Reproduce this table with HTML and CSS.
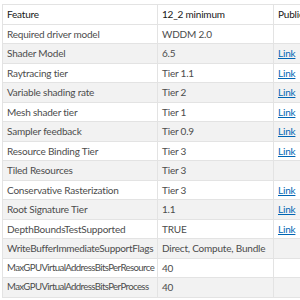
FILE: index.html
```html
<!DOCTYPE html>
<html lang="en">
<head>
    <meta charset="UTF-8">
    <meta name="viewport" content="width=device-width, initial-scale=1.0">
    <title>Feature Levels</title>
    <link rel="stylesheet" href="styles.css">
</head>
<body>
    <table class="features">
        <colgroup>
            <col class="col-feature">
            <col class="col-min">
            <col class="col-doc">
        </colgroup>
        <thead>
            <tr><th>Feature</th><th>12_2 minimum</th><th>Public documentation</th></tr>
        </thead>
        <tbody>
            <tr><td>Required driver model</td><td>WDDM 2.0</td><td></td></tr>
            <tr><td>Shader Model</td><td>6.5</td><td><a href="#">Link</a></td></tr>
            <tr><td>Raytracing tier</td><td>Tier 1.1</td><td><a href="#">Link</a></td></tr>
            <tr><td>Variable shading rate</td><td>Tier 2</td><td><a href="#">Link</a></td></tr>
            <tr><td>Mesh shader tier</td><td>Tier 1</td><td><a href="#">Link</a></td></tr>
            <tr><td>Sampler feedback</td><td>Tier 0.9</td><td><a href="#">Link</a></td></tr>
            <tr><td>Resource Binding Tier</td><td>Tier 3</td><td><a href="#">Link</a></td></tr>
            <tr><td>Tiled Resources</td><td>Tier 3</td><td></td></tr>
            <tr><td>Conservative Rasterization</td><td>Tier 3</td><td><a href="#">Link</a></td></tr>
            <tr><td>Root Signature Tier</td><td>1.1</td><td><a href="#">Link</a></td></tr>
            <tr><td>DepthBoundsTestSupported</td><td>TRUE</td><td><a href="#">Link</a></td></tr>
            <tr><td class="long">WriteBufferImmediateSupportFlags</td><td>Direct, Compute, Bundle</td><td></td></tr>
            <tr><td class="longer">MaxGPUVirtualAddressBitsPerResource</td><td>40</td><td></td></tr>
            <tr><td class="longer">MaxGPUVirtualAddressBitsPerProcess</td><td>40</td><td></td></tr>
        </tbody>
    </table>
</body>
</html>
```

FILE: styles.css
```css
html, body {
    overflow: hidden;
}
body {
    font-family: Lato, "Liberation Sans", sans-serif;
    font-size: 10px;
    letter-spacing: -0.2px;
    color: #4c4c4c;
    background: #fff;
    margin: 4px 0 0 2px;
}
.features {
    border-collapse: collapse;
    table-layout: fixed;
    width: 421px;
}
.col-feature { width: 155px; }
.col-min { width: 116px; }
.col-doc { width: 150px; }
.features th,
.features td {
    border: 1px solid #e3e3e3;
    padding: 2px 4px;
    line-height: 14.5px;
    text-align: left;
    white-space: nowrap;
    overflow: hidden;
}
.features td.long {
    padding-right: 0;
    letter-spacing: -0.3px;
}
.features td.longer {
    padding-right: 0;
    font-size: 9.6px;
    letter-spacing: -0.6px;
}
.features th {
    font-weight: normal;
    color: #171717;
}
.features tbody tr:nth-child(even) {
    background: #f2f2f2;
}
.features a {
    color: #0065b3;
}
```
